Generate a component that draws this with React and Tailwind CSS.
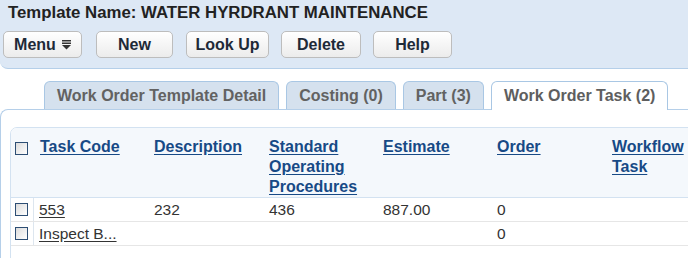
import React from 'react';

const cols = 'grid grid-cols-[23px_114px_115px_114px_114px_115px_1fr]';

function Check() {
  return (
    <span className="block w-[13px] h-[13px] border border-[#2d4e74] bg-gradient-to-br from-[#dcdcdc] to-[#ffffff]"></span>
  );
}

function Btn({ children, w }) {
  return (
    <button className={`${w} h-[27px] rounded-[5px] border border-[#bdbdbd] bg-gradient-to-b from-[#ffffff] to-[#ececec] text-[16px] font-bold text-[#1e2a38] flex items-center justify-center gap-[6px]`}>
      {children}
    </button>
  );
}

function Tab({ label, active }) {
  return (
    <div
      className={
        active
          ? 'relative z-10 -mb-px h-[29px] px-[12px] flex items-center rounded-t-[6px] border border-b-0 border-[#a9c7e4] bg-white text-[16px] font-bold text-[#5e5e5e]'
          : 'relative z-10 h-[28px] px-[12px] flex items-center rounded-t-[6px] border border-b-0 border-[#a9c7e4] bg-[#d5e1ee] text-[16px] font-bold text-[#626262]'
      }
    >
      {label}
    </div>
  );
}

function HeadCell({ children }) {
  return (
    <div className="pl-[6px] pt-[9px] text-[16px] leading-[20px] font-bold text-[#174a86]">
      <span className="underline underline-offset-2">{children}</span>
    </div>
  );
}

export default function App() {
  const rows = [
    { code: '553', desc: '232', sop: '436', est: '887.00', order: '0' },
    { code: 'Inspect B...', desc: '', sop: '', est: '', order: '0' },
  ];

  return (
    <div className="w-[688px] h-[258px] overflow-hidden bg-white font-['Liberation_Sans',Arial,sans-serif]">
      {/* header */}
      <div className="h-[69px] bg-[#dde8f5] border-b border-[#b5cfe9] rounded-bl-[8px] px-[3px]">
        <div className="pl-[5px] pt-[3px] text-[16.8px] leading-[19px] font-bold text-[#222]">
          Template Name: WATER HYRDRANT MAINTENANCE
        </div>
        <div className="flex mt-[9px]">
          <Btn w="w-[79px]">
            Menu
            <svg width="9" height="10" viewBox="0 0 9 10">
              <rect x="0" y="0" width="9" height="1.5" fill="#333" />
              <rect x="0" y="2.5" width="9" height="1.5" fill="#333" />
              <path d="M0 5 L9 5 L4.5 9.5 Z" fill="#333" />
            </svg>
          </Btn>
          <div className="ml-[14px]"><Btn w="w-[77px]">New</Btn></div>
          <div className="ml-[13px]"><Btn w="w-[83px]">Look Up</Btn></div>
          <div className="ml-[12px]"><Btn w="w-[80px]">Delete</Btn></div>
          <div className="ml-[12px]"><Btn w="w-[79px]">Help</Btn></div>
        </div>
      </div>

      {/* tabs */}
      <div className="flex items-end gap-[7px] pl-[44px] pt-[12px]">
        <Tab label="Work Order Template Detail" />
        <Tab label="Costing (0)" />
        <Tab label="Part (3)" />
        <Tab label="Work Order Task (2)" active />
      </div>

      {/* content */}
      <div className="border-t border-l border-[#b5cfe9] rounded-tl-[8px] pt-[17px] pl-[9px]">
        <div className="w-[700px] h-[140px] border border-[#d3e2f1] rounded-[7px] overflow-hidden">
          <div className={`${cols} h-[70px] bg-[#f4f8fc] border-b border-[#d3e2f1]`}>
            <div className="pl-[4px] pt-[14px]"><Check /></div>
            <HeadCell>Task Code</HeadCell>
            <HeadCell>Description</HeadCell>
            <HeadCell>Standard<br />Operating<br />Procedures</HeadCell>
            <HeadCell>Estimate</HeadCell>
            <HeadCell>Order</HeadCell>
            <HeadCell>Workflow<br />Task</HeadCell>
          </div>
          {rows.map((r, i) => (
            <div key={i} className={`${cols} h-[24px] border-b border-[#e6e6e6] text-[15.5px] leading-[20px] text-[#333]`}>
              <div className="pl-[4px] pt-[5px] border-r border-[#dde6ef]"><Check /></div>
              <div className="pl-[5px] pt-[2px]"><span className="underline underline-offset-2">{r.code}</span></div>
              <div className="pl-[6px] pt-[2px]">{r.desc}</div>
              <div className="pl-[6px] pt-[2px]">{r.sop}</div>
              <div className="pl-[6px] pt-[2px]">{r.est}</div>
              <div className="pl-[6px] pt-[2px]">{r.order}</div>
              <div></div>
            </div>
          ))}
        </div>
      </div>
    </div>
  );
}
